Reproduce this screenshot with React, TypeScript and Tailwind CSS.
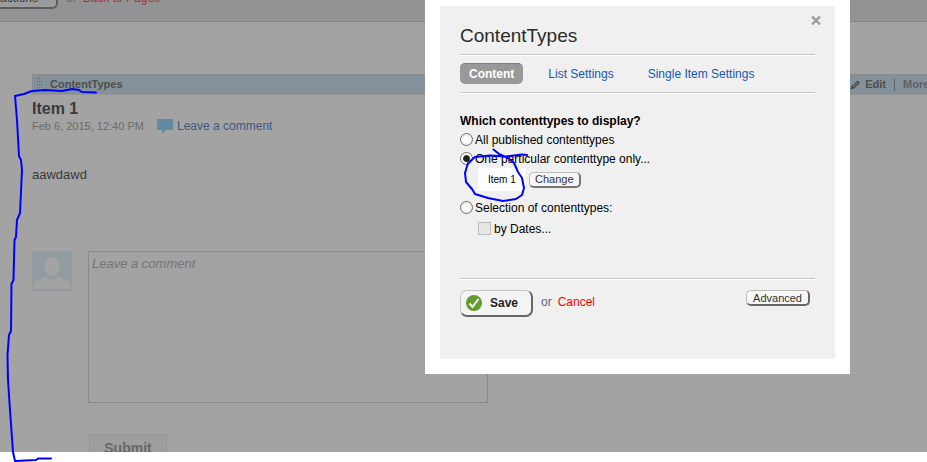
import { useState } from 'react';

type Display = 'all' | 'one' | 'selection';

const TABS = ['Content', 'List Settings', 'Single Item Settings'];

function Divider() {
  return <div className="h-0.5 border-t border-[#c8c8c8] bg-white" />;
}

function Toolbar() {
  return (
    <header className="flex h-[22px] shrink-0 items-end overflow-hidden border-b border-[#858585] bg-[#929395] pb-3 text-xs">
      <button className="flex h-7 w-[58px] shrink-0 items-center justify-between rounded-r-md border border-l-0 border-r-2 border-b-2 border-[#5c5c5c] bg-[#9b9b9b] pt-1.5 pr-2 text-[#3c3c3c]">
        actions
        <span className="text-[8px]">▼</span>
      </button>
      <span className="flex h-7 items-center gap-1.5 pt-1.5 pl-2 text-[#6a6a6a]">
        or
        <a href="#pages" className="text-[#a82f3c]">
          Back to Pages
        </a>
      </span>
    </header>
  );
}

function WidgetBar() {
  return (
    <div className="flex h-[21px] items-center border-y border-l border-t-[#8a8a8a] border-b-[#959595] border-l-[#8a8a8a] bg-[#84919a] pl-1 text-[11px] font-bold text-[#4e4e4e]">
      <svg width="6" height="14" className="mr-[7px]" fill="#5f6a73">
        {[0, 2, 4].map((x) =>
          [0, 3, 6, 9, 12].map((y) => <rect key={`${x}-${y}`} x={x} y={y} width="1" height="1" />)
        )}
      </svg>
      <h2 className="flex-1">ContentTypes</h2>
      <button className="flex items-center gap-1 font-bold">
        <svg width="11" height="10" viewBox="0 0 11 10">
          <path d="M0.5 9.5 L1.5 6.5 L7.5 0.5 L10 3 L4 8.5 Z" fill="#444" />
          <path d="M3 7 L8 2.5" stroke="#8a959d" strokeWidth="1" />
        </svg>
        Edit
      </button>
      <span className="mx-2 h-3 border-l border-[#5e666c]" />
      <button className="w-6 overflow-hidden font-bold whitespace-nowrap text-[#5b6268]">More</button>
    </div>
  );
}

function Item() {
  return (
    <article className="pt-[5px]">
      <h1 className="text-base leading-[18px] font-bold text-[#3a3a3a]">Item 1</h1>
      <div className="flex h-4 items-center">
        <time className="w-[125px] text-[11px] text-[#6b6b6b]">Feb 6, 2015, 12:40 PM</time>
        <a href="#comment" className="flex items-center gap-1 text-xs text-[#41597f]">
          <svg width="16" height="15" fill="#6489a3">
            <path d="M0 0 H16 V11 H9 L5 15 V11 H0 Z" />
          </svg>
          Leave a comment
        </a>
      </div>
      <p className="pt-[31px] text-[13px] leading-5 text-[#3a3a3a]">aawdawd</p>
      <form className="flex gap-4 pt-[66px]" onSubmit={(e) => e.preventDefault()}>
        <svg width="40" height="40" className="shrink-0">
          <rect width="40" height="40" fill="#929b9f" />
          <ellipse cx="20" cy="15.5" rx="8" ry="9.5" fill="#a3a3a3" />
          <path d="M2 38 V31 L13 26 Q20 30 27 26 L38 31 V38 Z" fill="#a3a3a3" />
        </svg>
        <div>
          <textarea
            id="comment"
            aria-label="Leave a comment"
            placeholder="Leave a comment"
            className="block h-[152px] w-[400px] resize-none border border-[#8a8a8a] px-[3px] py-1 text-[13px] leading-4 italic placeholder:text-[#757575]"
          />
          <button className="mt-[31px] ml-px h-[27px] w-[78px] border border-[#949494] bg-[#9e9e9e] text-sm font-bold text-[#666]">
            Submit
          </button>
        </div>
      </form>
    </article>
  );
}

function Dialog() {
  const [tab, setTab] = useState(TABS[0]);
  const [display, setDisplay] = useState<Display>('one');

  const radio = (value: Display, label: string) => (
    <label className="flex h-[19px] items-center gap-0.5">
      <input
        type="radio"
        name="display"
        className="size-[13px] appearance-none rounded-full border border-[#707070] bg-white bg-clip-content p-0.5 checked:bg-[#1f1f1f] checked:shadow-[inset_0_0_0_2px_#fff]"
        checked={display === value}
        onChange={() => setDisplay(value)}
      />
      {label}
    </label>
  );

  return (
    <section
      role="dialog"
      aria-label="ContentTypes"
      className="absolute top-0 right-[77px] w-[425px] bg-white px-[15px] pt-1.5 pb-[15px]"
    >
      <div className="relative bg-[#f0f0f0] px-5 pt-[18px] pb-[42px] text-xs text-black">
        <button aria-label="Close" className="absolute top-2.5 right-3.5">
          <svg width="10" height="9" viewBox="0 0 10 9" stroke="#9a9a9a" strokeWidth="2.2">
            <path d="M1 0.5 L9 8.5 M9 0.5 L1 8.5" />
          </svg>
        </button>
        <h2 className="pb-1.5 text-[19px] leading-6 text-[#2b2b2b]">ContentTypes</h2>
        <Divider />
        <nav className="flex gap-4 pt-[7px] pb-2">
          {TABS.map((t) => (
            <button
              key={t}
              onClick={() => setTab(t)}
              className={
                t === tab
                  ? 'h-[21px] rounded-[5px] border-t border-[#7d7d7d] bg-[#999] px-[9px] font-bold text-white'
                  : 'h-[21px] px-[9px] text-[#1357b8]'
              }
            >
              {t}
            </button>
          ))}
        </nav>
        <Divider />
        <fieldset className="h-[184px] pt-[18px]">
          <legend className="float-left h-[18px] w-full font-bold leading-[18px]">
            Which contenttypes to display?
          </legend>
          <div className="clear-both">
            {radio('all', 'All published contenttypes')}
            {radio('one', 'One particular contenttype only...')}
            <div className="flex h-[23px] items-center gap-[3px] pl-[18px]">
              <span className="h-[23px] w-12 bg-white pl-2.5 text-[10px] leading-[23px]">Item 1</span>
              <button className="h-4 rounded-[5px] border border-r-2 border-b-2 border-[#bbb] border-r-[#777] border-b-[#777] bg-[#f6f6f6] px-[5px] text-[11px] leading-3 text-[#333]">
                Change
              </button>
            </div>
            <div className="pt-[7px]">{radio('selection', 'Selection of contenttypes:')}</div>
            <label className="flex h-[23px] items-center gap-[3px] pl-[18px]">
              <input type="checkbox" className="size-[13px] appearance-none border border-[#bcbcbc] bg-[#e6e6e6]" />
              by Dates...
            </label>
          </div>
        </fieldset>
        <Divider />
        <footer className="flex items-start pt-2.5 pr-[5px]">
          <button className="flex h-[27px] w-[73px] items-center gap-2 rounded-[7px] border border-r-2 border-b-2 border-[#c4c4c4] border-r-[#666] border-b-[#666] bg-[#f4f4f4] pl-[5px] font-bold text-[#222]">
            <svg width="16" height="16" viewBox="0 0 16 16">
              <circle cx="8" cy="8" r="8" fill="#649b2f" />
              <path d="M3.5 8.5 L6.5 12 L12.5 4" fill="none" stroke="#fff" strokeWidth="2" />
            </svg>
            Save
          </button>
          <span className="ml-2 leading-6 text-[#666]">or</span>
          <a href="#cancel" className="ml-1.5 leading-6 text-[#f00]">
            Cancel
          </a>
          <button className="ml-auto h-4 rounded-[5px] border border-r-2 border-b-2 border-[#bbb] border-r-[#666] border-b-[#666] bg-[#f6f6f6] px-1.5 text-[11px] leading-3 text-[#333]">
            Advanced
          </button>
        </footer>
      </div>
    </section>
  );
}

// Freehand pen marks drawn over the page
function PenMarks() {
  return (
    <svg
      className="pointer-events-none absolute top-0 left-0"
      width="540"
      height="462"
      fill="none"
      stroke="#00f"
      strokeWidth="2"
      strokeLinecap="round"
      strokeLinejoin="round"
    >
      <path d="M96 92.5 L82 92 L79 90 L72 89 L62 91 L45 90 L32 91 L24 94 L15 96 L17 120 L19 156 L21 160 L22 170 L20 213 L17 220 L16 237 L14.5 240 L13.5 280 L11.5 284 L11 331 L9 335 L7.5 355 L8 380 L10 410 L13 452 L15 461 L36 460 L38 458.5 L51 458.5" />
      <path d="M493.5 149.5 L499 154 L508 158 L514 163 L518 172 L522 178 L524 188 L522 195 L516 199 L503 201 L488 198 L475 194 L472 189 L466 182 L465 173 L468 163 L475 157 L490 155.5 L505 156.5 L522 154.5 L527 155" />
    </svg>
  );
}

export default function App() {
  return (
    <div className="relative flex h-screen flex-col overflow-hidden bg-white pb-2.5 font-['Liberation_Sans',Arial,sans-serif]">
      <main className="flex min-h-0 flex-1 flex-col overflow-hidden bg-[#a3a3a3]">
        <Toolbar />
        <div className="pt-[52px] pl-8">
          <WidgetBar />
          <Item />
        </div>
      </main>
      <Dialog />
      <PenMarks />
    </div>
  );
}
